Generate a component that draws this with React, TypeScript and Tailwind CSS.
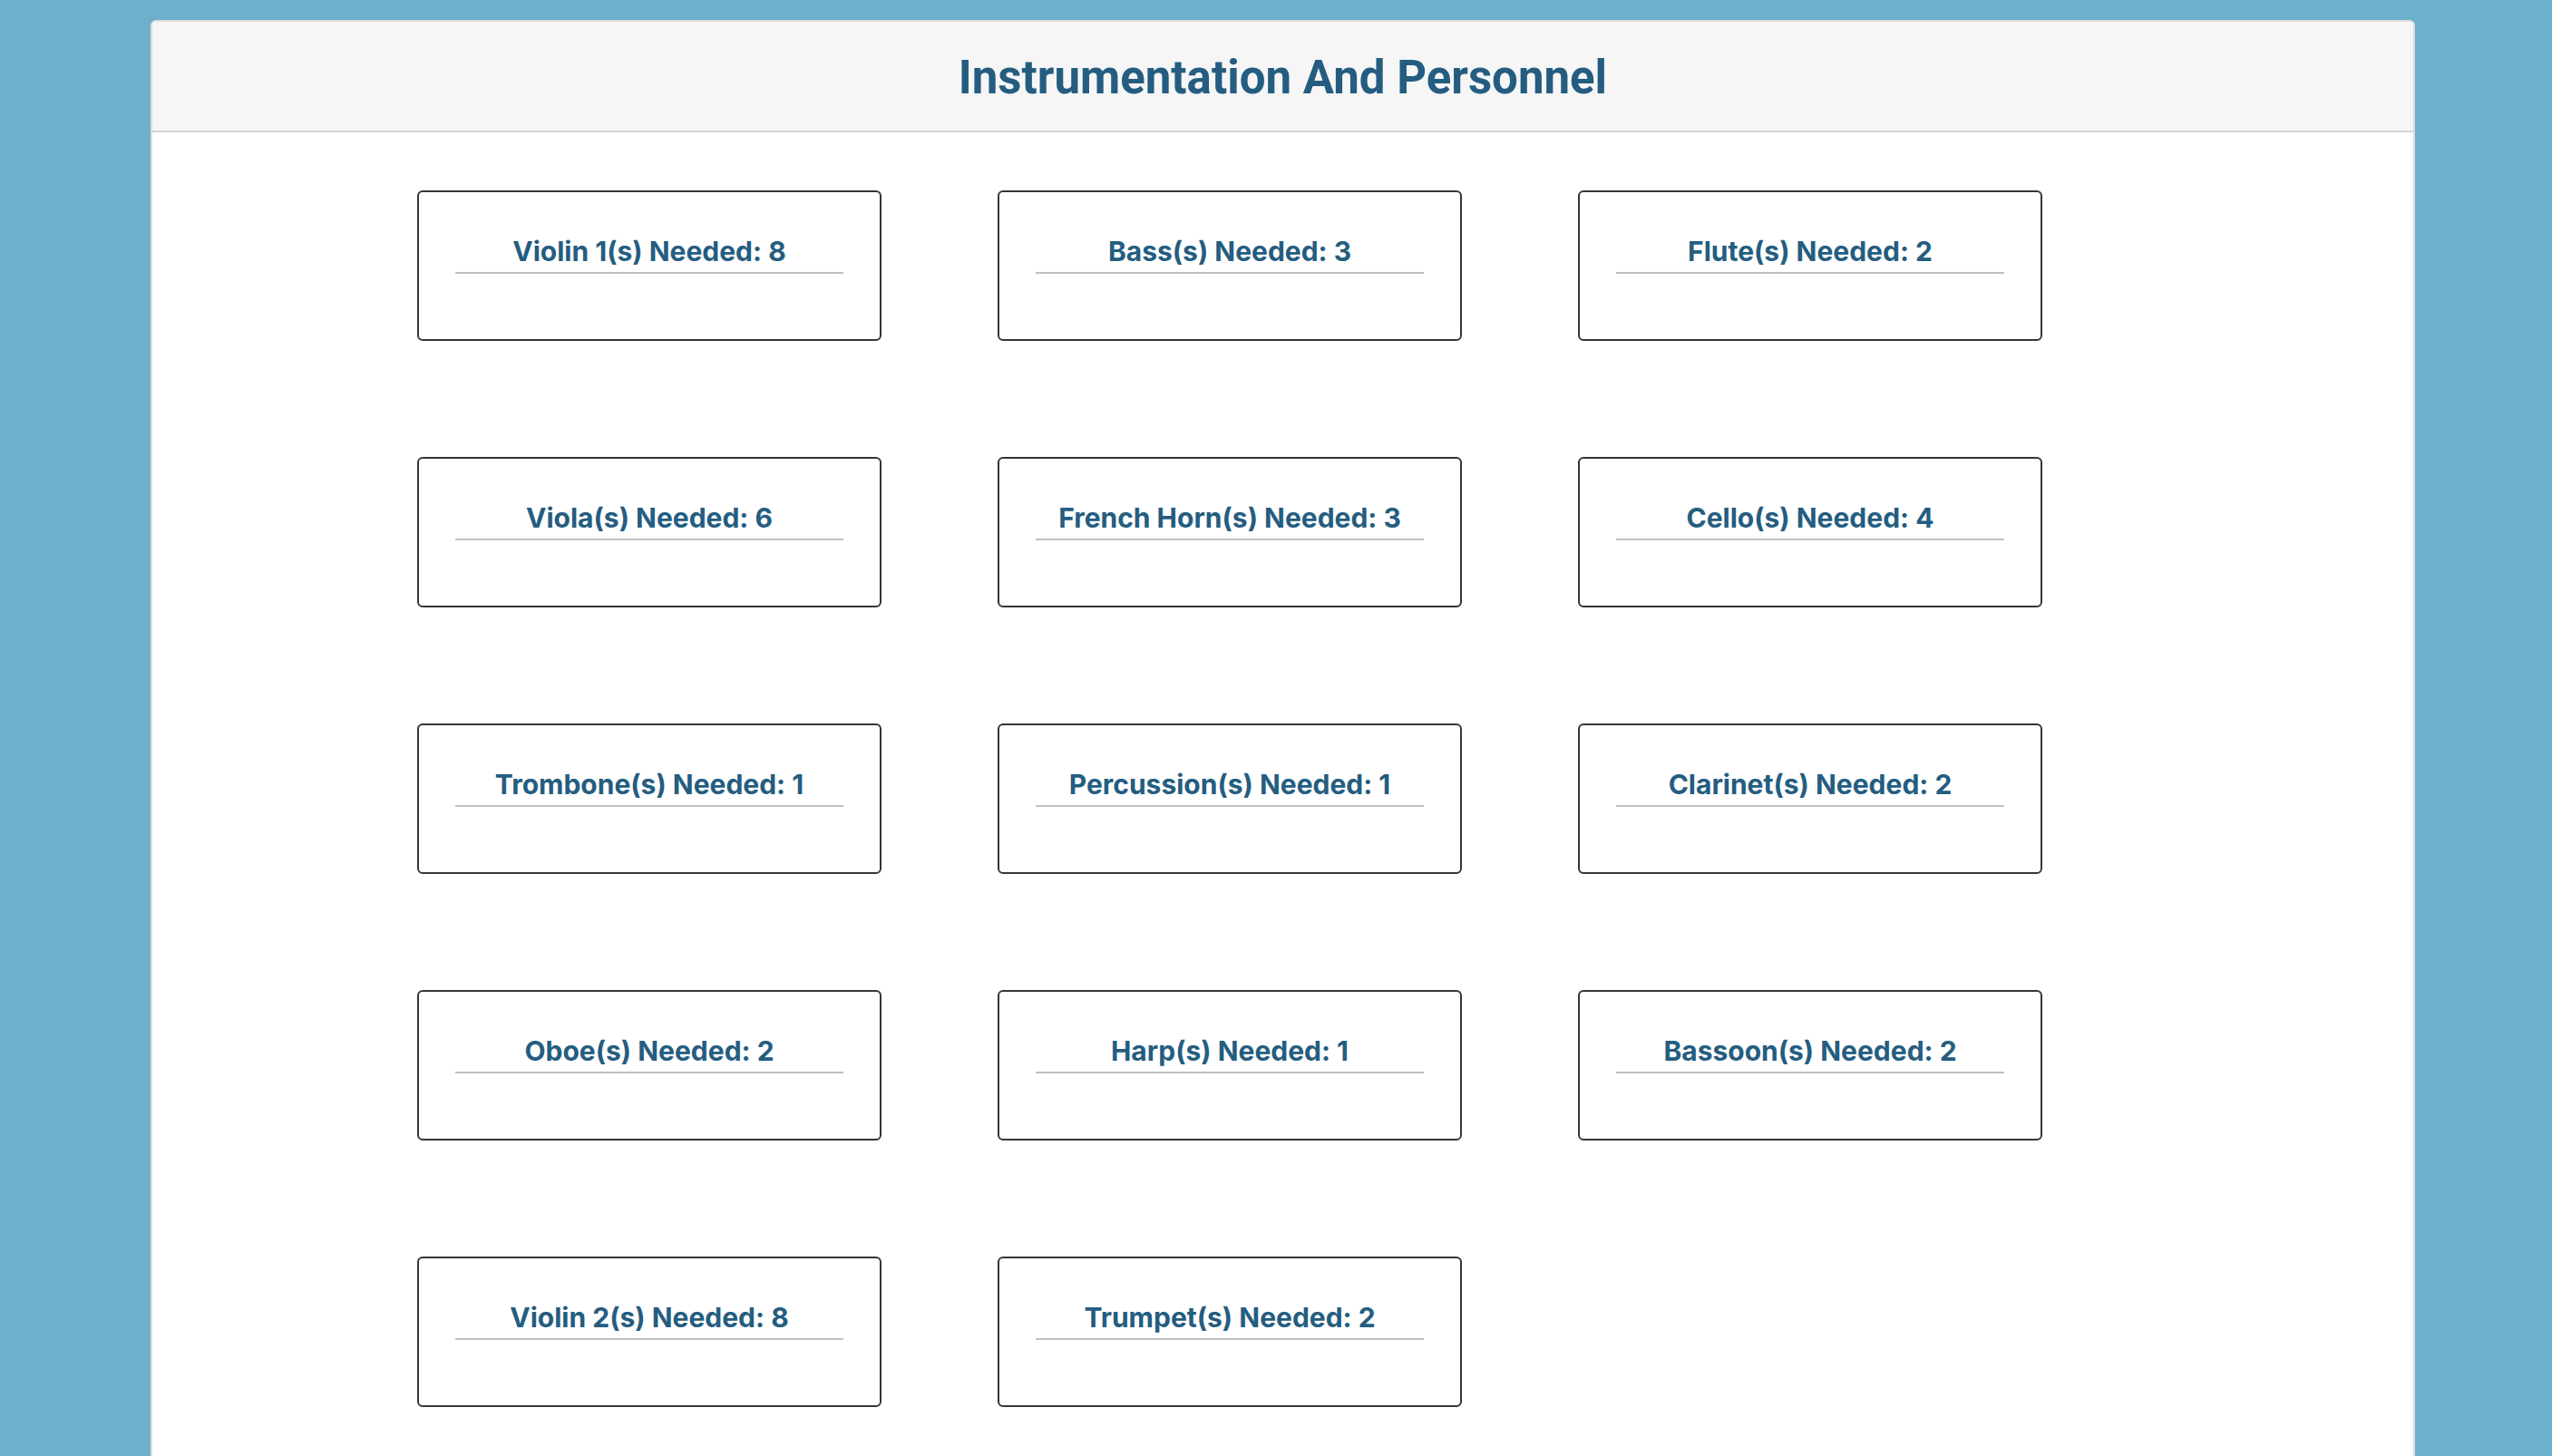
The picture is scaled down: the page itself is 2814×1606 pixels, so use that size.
import React from 'react';

const instruments: { name: string; count: number }[] = [
  { name: 'Violin 1', count: 8 },
  { name: 'Bass', count: 3 },
  { name: 'Flute', count: 2 },
  { name: 'Viola', count: 6 },
  { name: 'French Horn', count: 3 },
  { name: 'Cello', count: 4 },
  { name: 'Trombone', count: 1 },
  { name: 'Percussion', count: 1 },
  { name: 'Clarinet', count: 2 },
  { name: 'Oboe', count: 2 },
  { name: 'Harp', count: 1 },
  { name: 'Bassoon', count: 2 },
  { name: 'Violin 2', count: 8 },
  { name: 'Trumpet', count: 2 },
];

const InstrumentCard: React.FC<{ name: string; count: number }> = ({ name, count }) => (
  <div className="h-[166px] rounded-md border-2 border-[#33363b] bg-white px-[40px] pt-[47px]">
    <h3 className="border-b-2 border-[#c0c0c0] pb-[5px] text-center font-['Inter',sans-serif] text-[30px] leading-[36px] font-bold text-[#245d80]">
      {name}(s) Needed: {count}
    </h3>
  </div>
);

const App: React.FC = () => {
  return (
    <div className="min-h-screen bg-[#6cb0cd] pt-[22px] font-['Roboto',sans-serif]">
      <div className="ml-[166px] mr-[151px] min-h-[1700px] rounded-t-md border-2 border-b-0 border-[#dcdcdc] bg-white">
        <header className="flex h-[122px] items-center justify-center rounded-t-md border-b-2 border-[#d3d3d3] bg-[#f6f6f6] pt-[4px]">
          <h1 className="text-[51px] font-bold text-[#245d80]">Instrumentation And Personnel</h1>
        </header>
        <main className="pl-[292px] pt-[64px] pb-[80px]">
          <div className="grid grid-cols-[repeat(3,512px)] gap-[128px]">
            {instruments.map((i) => (
              <InstrumentCard key={i.name} name={i.name} count={i.count} />
            ))}
          </div>
        </main>
      </div>
    </div>
  );
};

export default App;
